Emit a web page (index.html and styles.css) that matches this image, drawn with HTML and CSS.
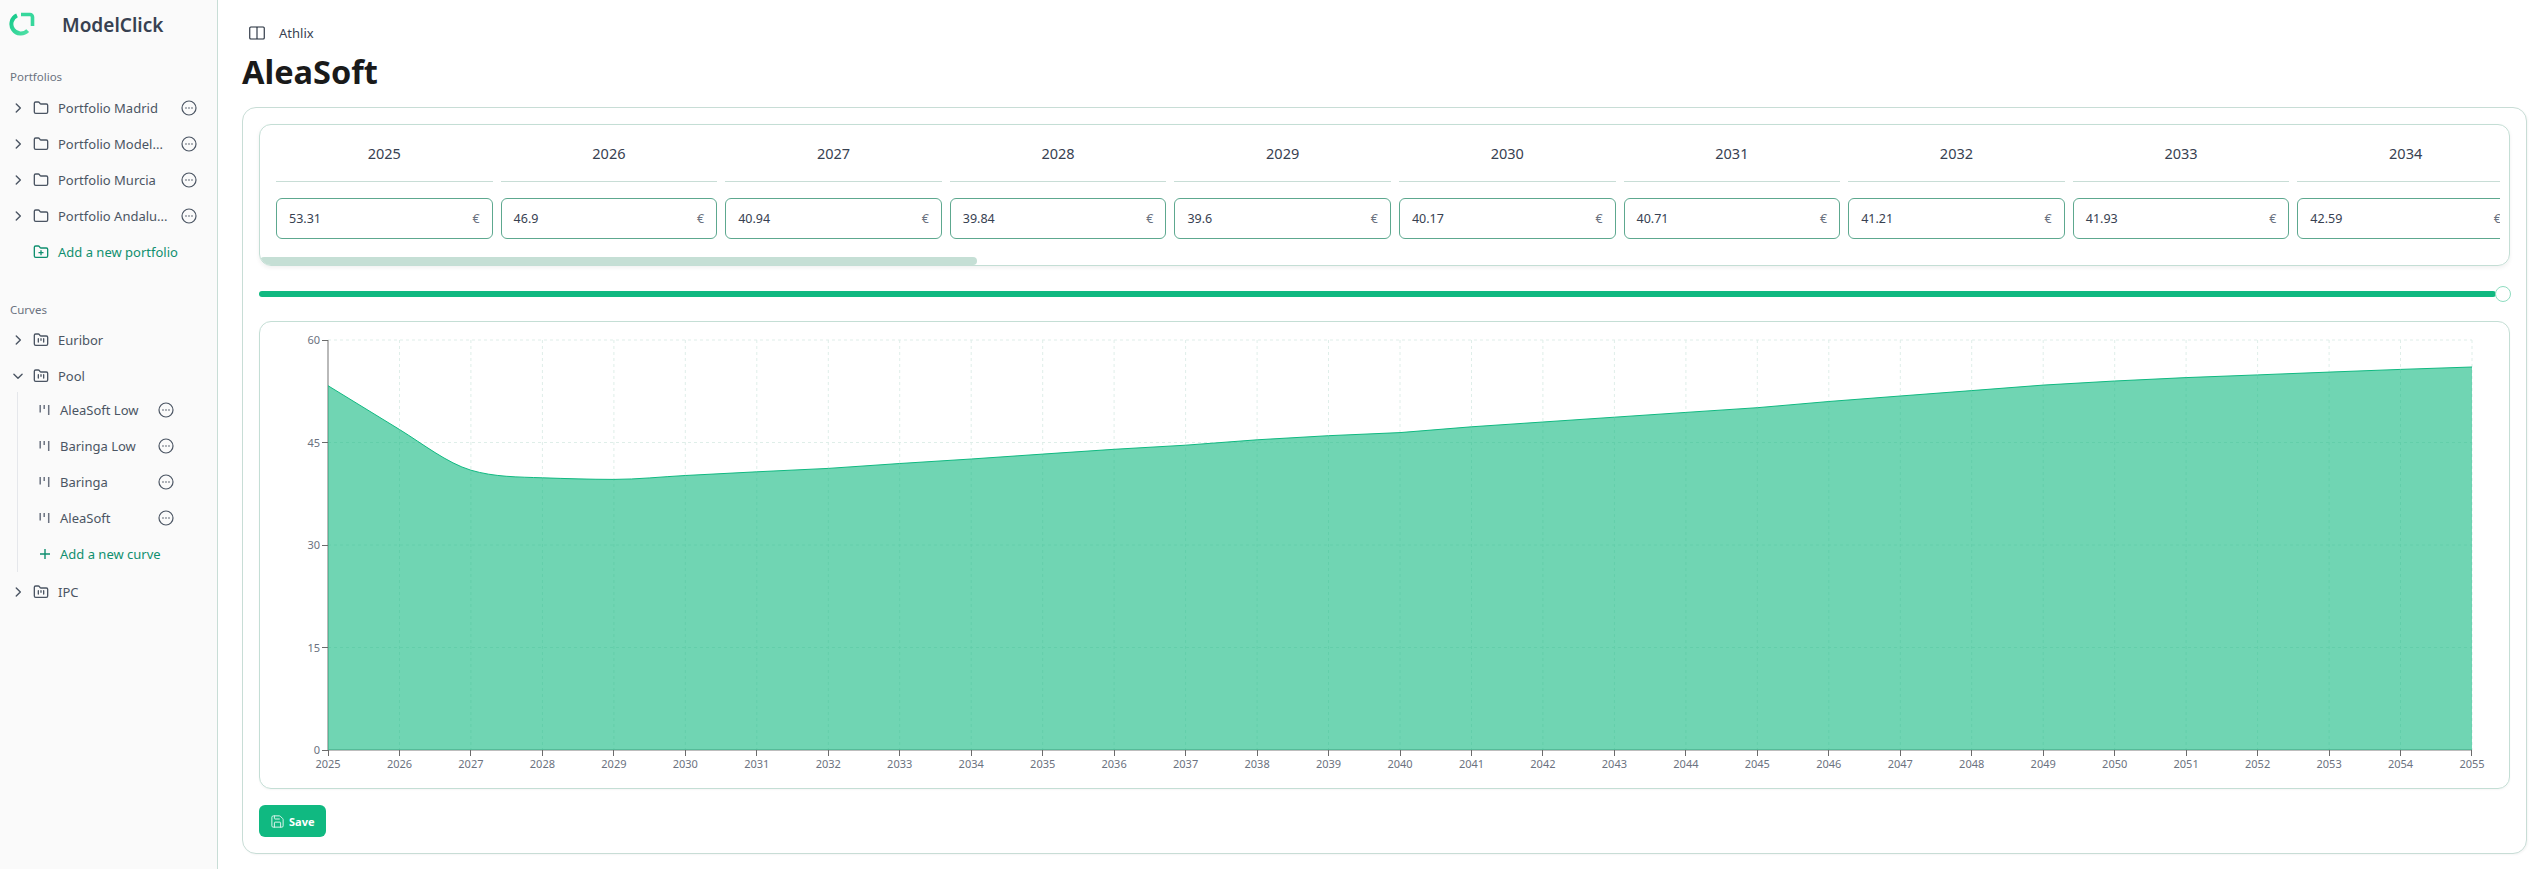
FILE: index.html
```html
<!DOCTYPE html>
<html lang="en">
<head>
<meta charset="utf-8">
<title>AleaSoft - ModelClick</title>
<link rel="stylesheet" href="styles.css">
</head>
<body>
<svg class="defs" width="0" height="0" aria-hidden="true">
  <symbol id="i-right" viewBox="0 0 24 24"><path d="m9 5 7 7-7 7"/></symbol>
  <symbol id="i-down" viewBox="0 0 24 24"><path d="m5 9 7 7 7-7"/></symbol>
  <symbol id="i-folder" viewBox="0 0 24 24"><path d="M20 20a2 2 0 0 0 2-2V8a2 2 0 0 0-2-2h-7.9a2 2 0 0 1-1.69-.9L9.6 3.9A2 2 0 0 0 7.93 3H4a2 2 0 0 0-2 2v13a2 2 0 0 0 2 2Z"/></symbol>
  <symbol id="i-folder-plus" viewBox="0 0 24 24"><path d="M20 20a2 2 0 0 0 2-2V8a2 2 0 0 0-2-2h-7.9a2 2 0 0 1-1.69-.9L9.6 3.9A2 2 0 0 0 7.93 3H4a2 2 0 0 0-2 2v13a2 2 0 0 0 2 2Z"/><path d="M12 10v6M9 13h6"/></symbol>
  <symbol id="i-folder-bars" viewBox="0 0 24 24"><path d="M20 20a2 2 0 0 0 2-2V8a2 2 0 0 0-2-2h-7.9a2 2 0 0 1-1.69-.9L9.6 3.9A2 2 0 0 0 7.93 3H4a2 2 0 0 0-2 2v13a2 2 0 0 0 2 2Z"/><path d="M8 10v5M12 10v2.5M16 10v5"/></symbol>
  <symbol id="i-more" viewBox="0 0 16 16"><circle cx="8" cy="8" r="7"/><path class="dots" d="M5 8h.01M8 8h.01M11 8h.01"/></symbol>
  <symbol id="i-bars" viewBox="0 0 12 12"><path d="M1.2 1v7.5M5.2 1v4M9.7 1v10"/></symbol>
</svg>

<aside class="sidebar">
  <div class="brand">
    <svg class="logo" width="26" height="26" viewBox="0 0 26 26">
      <defs><linearGradient id="lg" x1="0" y1="0" x2="1" y2="1"><stop offset="0" stop-color="#14c98a"/><stop offset="1" stop-color="#4fe0a6"/></linearGradient></defs>
      <path class="logo-a" d="M8 3.4A9.5 9.5 0 1 0 18.7 18.7"/>
      <path class="logo-b" d="M12 2.5H21A2.5 2.5 0 0 1 23.5 5V14"/>
    </svg>
    <span class="brand-name">ModelClick</span>
  </div>

  <div class="section-label">Portfolios</div>
  <div class="row"><svg class="chev"><use href="#i-right"/></svg><svg class="ico"><use href="#i-folder"/></svg><span class="label">Portfolio Madrid</span><svg class="more"><use href="#i-more"/></svg></div>
  <div class="row"><svg class="chev"><use href="#i-right"/></svg><svg class="ico"><use href="#i-folder"/></svg><span class="label">Portfolio Model...</span><svg class="more"><use href="#i-more"/></svg></div>
  <div class="row"><svg class="chev"><use href="#i-right"/></svg><svg class="ico"><use href="#i-folder"/></svg><span class="label">Portfolio Murcia</span><svg class="more"><use href="#i-more"/></svg></div>
  <div class="row"><svg class="chev"><use href="#i-right"/></svg><svg class="ico"><use href="#i-folder"/></svg><span class="label">Portfolio Andalu...</span><svg class="more"><use href="#i-more"/></svg></div>
  <div class="row add"><span class="chev-space"></span><svg class="ico"><use href="#i-folder-plus"/></svg><span class="label">Add a new portfolio</span></div>

  <div class="section-label curves">Curves</div>
  <div class="row"><svg class="chev"><use href="#i-right"/></svg><svg class="ico"><use href="#i-folder-bars"/></svg><span class="label">Euribor</span></div>
  <div class="row"><svg class="chev"><use href="#i-down"/></svg><svg class="ico"><use href="#i-folder-bars"/></svg><span class="label">Pool</span></div>
  <div class="sub">
    <div class="subrow"><svg class="bars"><use href="#i-bars"/></svg><span class="label">AleaSoft Low</span><svg class="more"><use href="#i-more"/></svg></div>
    <div class="subrow"><svg class="bars"><use href="#i-bars"/></svg><span class="label">Baringa Low</span><svg class="more"><use href="#i-more"/></svg></div>
    <div class="subrow"><svg class="bars"><use href="#i-bars"/></svg><span class="label">Baringa</span><svg class="more"><use href="#i-more"/></svg></div>
    <div class="subrow"><svg class="bars"><use href="#i-bars"/></svg><span class="label">AleaSoft</span><svg class="more"><use href="#i-more"/></svg></div>
    <div class="subrow add"><svg class="plus" viewBox="0 0 12 12"><path d="M6 1v10M1 6h10"/></svg><span class="label">Add a new curve</span></div>
  </div>
  <div class="row"><svg class="chev"><use href="#i-right"/></svg><svg class="ico"><use href="#i-folder-bars"/></svg><span class="label">IPC</span></div>
</aside>

<main class="main">
  <div class="crumb">
    <svg class="panel-ico" viewBox="0 0 16 14"><rect x="0.75" y="1" width="14.5" height="12" rx="1"/><path d="M8 1v12"/></svg>
    <span>Athlix</span>
  </div>
  <h1 class="title">AleaSoft</h1>

  <section class="card">
    <div class="table">
      <div class="years">
        <div class="col"><div class="year">2025</div><div class="field"><span>53.31</span><span class="eur">€</span></div></div>
        <div class="col"><div class="year">2026</div><div class="field"><span>46.9</span><span class="eur">€</span></div></div>
        <div class="col"><div class="year">2027</div><div class="field"><span>40.94</span><span class="eur">€</span></div></div>
        <div class="col"><div class="year">2028</div><div class="field"><span>39.84</span><span class="eur">€</span></div></div>
        <div class="col"><div class="year">2029</div><div class="field"><span>39.6</span><span class="eur">€</span></div></div>
        <div class="col"><div class="year">2030</div><div class="field"><span>40.17</span><span class="eur">€</span></div></div>
        <div class="col"><div class="year">2031</div><div class="field"><span>40.71</span><span class="eur">€</span></div></div>
        <div class="col"><div class="year">2032</div><div class="field"><span>41.21</span><span class="eur">€</span></div></div>
        <div class="col"><div class="year">2033</div><div class="field"><span>41.93</span><span class="eur">€</span></div></div>
        <div class="col"><div class="year">2034</div><div class="field"><span>42.59</span><span class="eur">€</span></div></div>
      </div>
      <div class="scroll-thumb"></div>
    </div>

    <div class="slider"><div class="track"></div><div class="knob"></div></div>

    <div class="chart">
      <svg class="plot" width="2249" height="466" viewBox="260 322 2249 466">
        <path class="grid" d="M328 340H2472M328 442.5H2472M328 545H2472M328 647.5H2472M399.5 340V750M470.9 340V750M542.4 340V750M613.9 340V750M685.3 340V750M756.8 340V750M828.3 340V750M899.7 340V750M971.2 340V750M1042.7 340V750M1114.1 340V750M1185.6 340V750M1257.1 340V750M1328.5 340V750M1400 340V750M1471.5 340V750M1542.9 340V750M1614.4 340V750M1685.9 340V750M1757.3 340V750M1828.8 340V750M1900.3 340V750M1971.7 340V750M2043.2 340V750M2114.7 340V750M2186.1 340V750M2257.6 340V750M2329.1 340V750M2400.5 340V750M2472 340V750"/>
        <path class="axis" d="M328 340V750H2472"/>
        <path class="tick" d="M322 340.5H328M322 442.5H328M322 545.5H328M322 647.5H328M322 750.5H328M328.5 750V756M399.5 750V756M470.5 750V756M542.5 750V756M613.5 750V756M685.5 750V756M756.5 750V756M828.5 750V756M899.5 750V756M971.5 750V756M1042.5 750V756M1114.5 750V756M1185.5 750V756M1257.5 750V756M1328.5 750V756M1400.5 750V756M1471.5 750V756M1542.5 750V756M1614.5 750V756M1685.5 750V756M1757.5 750V756M1828.5 750V756M1900.5 750V756M1971.5 750V756M2043.5 750V756M2114.5 750V756M2186.5 750V756M2257.5 750V756M2329.5 750V756M2400.5 750V756M2471.5 750V756"/>
        <path class="area" d="M328 385.7L399.5 429.5C423 444 447 463 470.9 470.2C494 477 518 477 542.4 477.8C566 478.6 590 479.4 613.9 479.4C637 479.4 661 476.8 685.3 475.5L756.8 471.8L828.3 468.4L899.7 463.5L971.2 459L1042.7 454.1L1114.1 449.3L1185.6 445.2L1257.1 439.8L1328.5 435.7L1400 432.6L1471.5 426.8L1542.9 422L1614.4 417.2L1685.9 412.4L1757.3 407.7L1828.8 401.5L1900.3 396L1971.7 390.6L2043.2 385.1L2114.7 381L2186.1 377.6L2257.6 374.9L2329.1 372.1L2400.5 369.4L2472 367V750H328Z"/>
        <path class="line" d="M328 385.7L399.5 429.5C423 444 447 463 470.9 470.2C494 477 518 477 542.4 477.8C566 478.6 590 479.4 613.9 479.4C637 479.4 661 476.8 685.3 475.5L756.8 471.8L828.3 468.4L899.7 463.5L971.2 459L1042.7 454.1L1114.1 449.3L1185.6 445.2L1257.1 439.8L1328.5 435.7L1400 432.6L1471.5 426.8L1542.9 422L1614.4 417.2L1685.9 412.4L1757.3 407.7L1828.8 401.5L1900.3 396L1971.7 390.6L2043.2 385.1L2114.7 381L2186.1 377.6L2257.6 374.9L2329.1 372.1L2400.5 369.4L2472 367"/>
        <g class="ylab">
          <text x="320" y="344">60</text><text x="320" y="447">45</text><text x="320" y="549">30</text><text x="320" y="652">15</text><text x="320" y="754">0</text>
        </g>
        <g class="xlab">
          <text x="328" y="768">2025</text><text x="399.5" y="768">2026</text><text x="470.9" y="768">2027</text><text x="542.4" y="768">2028</text><text x="613.9" y="768">2029</text><text x="685.3" y="768">2030</text><text x="756.8" y="768">2031</text><text x="828.3" y="768">2032</text><text x="899.7" y="768">2033</text><text x="971.2" y="768">2034</text><text x="1042.7" y="768">2035</text><text x="1114.1" y="768">2036</text><text x="1185.6" y="768">2037</text><text x="1257.1" y="768">2038</text><text x="1328.5" y="768">2039</text><text x="1400" y="768">2040</text><text x="1471.5" y="768">2041</text><text x="1542.9" y="768">2042</text><text x="1614.4" y="768">2043</text><text x="1685.9" y="768">2044</text><text x="1757.3" y="768">2045</text><text x="1828.8" y="768">2046</text><text x="1900.3" y="768">2047</text><text x="1971.7" y="768">2048</text><text x="2043.2" y="768">2049</text><text x="2114.7" y="768">2050</text><text x="2186.1" y="768">2051</text><text x="2257.6" y="768">2052</text><text x="2329.1" y="768">2053</text><text x="2400.5" y="768">2054</text><text x="2472" y="768">2055</text>
        </g>
      </svg>
    </div>

    <button class="save" type="button">
      <svg class="save-ico" viewBox="0 0 24 24"><path d="M15.2 3a2 2 0 0 1 1.4.6l3.8 3.8a2 2 0 0 1 .6 1.4V19a2 2 0 0 1-2 2H5a2 2 0 0 1-2-2V5a2 2 0 0 1 2-2z"/><path d="M17 21v-7a1 1 0 0 0-1-1H8a1 1 0 0 0-1 1v7"/><path d="M7 3v4a1 1 0 0 0 1 1h7"/></svg>
      <span>Save</span>
    </button>
  </section>
</main>
</body>
</html>
```
FILE: styles.css
```css
* { box-sizing: border-box; }
html, body { margin: 0; height: 100%; }
body {
  display: flex;
  height: 869px;
  overflow: hidden;
  background: #fff;
  font-family: "Noto Sans", "Open Sans", sans-serif;
  color: #1f2937;
}
.defs { position: absolute; }

/* sidebar */
.sidebar {
  flex: none;
  width: 218px;
  background: #fafafa;
  border-right: 1px solid #c8ddd6;
}
.brand {
  display: flex;
  align-items: center;
  height: 49px;
  padding-left: 9px;
  gap: 27px;
}
.logo { flex: none; }
.logo-a { fill: none; stroke: url(#lg); stroke-width: 4; }
.logo-b { fill: none; stroke: #37d79c; stroke-width: 3.6; }
.brand-name { font-size: 19px; font-weight: 600; color: #374151; }
.section-label {
  display: flex;
  align-items: center;
  height: 20px;
  margin-top: 17px;
  padding-left: 10px;
  font-size: 11.5px;
  color: #6b7280;
}
.section-label.curves { margin-top: 29px; }
.section-label + .row { margin-top: 4px; }
.section-label.curves + .row { margin-top: 3px; }
.row, .subrow {
  display: flex;
  align-items: center;
  height: 36px;
  font-size: 13px;
  color: #4b5563;
}
.row { padding: 0 20px 0 11px; }
.subrow { padding: 0 43px 0 21px; }
.label {
  flex: 1;
  min-width: 0;
  white-space: nowrap;
}
.row .label { margin-left: 9px; }
.subrow .label { margin-left: 9px; }
.chev, .chev-space { flex: none; width: 14px; height: 14px; margin-right: 8px; }
.chev { fill: none; stroke: #4b5563; stroke-width: 2.4; stroke-linecap: round; stroke-linejoin: round; }
.ico { flex: none; width: 16px; height: 16px; fill: none; stroke: #4b5563; stroke-width: 2; stroke-linecap: round; stroke-linejoin: round; }
.more { flex: none; width: 16px; height: 16px; fill: none; stroke: #4b5563; stroke-width: 1.2; }
.dots { stroke-width: 1.6; stroke-linecap: round; }
.bars { flex: none; width: 12px; height: 12px; fill: none; stroke: #6b7280; stroke-width: 1.5; }
.plus { flex: none; width: 12px; height: 12px; fill: none; stroke: #0f8f6f; stroke-width: 1.4; }
.add { color: #0f8f6f; }
.add .ico { stroke: #0f8f6f; }
.sub {
  margin: -2px 0 2px 17px;
  border-left: 1px solid #e5e7eb;
}

/* main */
.main {
  flex: 1;
  min-width: 0;
  display: flex;
  flex-direction: column;
  padding: 15px 17px 15px 24px;
}
.crumb {
  display: flex;
  align-items: center;
  gap: 14px;
  height: 36px;
  padding-left: 7px;
  font-size: 13px;
  color: #374151;
}
.panel-ico { width: 16px; height: 14px; fill: none; stroke: #1f2937; stroke-width: 1.1; }
.title {
  margin: 0;
  height: 57px;
  font-size: 32.5px;
  line-height: 42px;
  font-weight: 700;
  color: #1a1a1a;
}

.card {
  flex: none;
  height: 747px;
  padding: 16px;
  border: 1px solid #c8ddd6;
  border-radius: 14px;
  box-shadow: 1px 1px 2px rgba(0, 0, 0, .04);
  background: #fff;
}
.table {
  height: 142px;
  border: 1px solid #c4ded5;
  border-radius: 12px;
  overflow: hidden;
  box-shadow: 0 2px 4px rgba(0, 0, 0, .06);
}
.years {
  display: flex;
  gap: 8px;
  margin: 0 9px 0 16px;
  overflow: hidden;
}
.col { flex: none; width: 216.6px; }
.year {
  height: 57px;
  padding-top: 17px;
  border-bottom: 1px solid #c8ddd6;
  text-align: center;
  font-size: 14.5px;
  line-height: 22px;
  color: #374151;
}
.field {
  display: flex;
  align-items: center;
  justify-content: space-between;
  height: 41px;
  margin-top: 16px;
  padding: 0 12px;
  border: 1px solid #5da88f;
  border-radius: 6px;
  font-size: 12.5px;
  color: #374151;
}
.eur { color: #6b7280; }
.scroll-thumb {
  width: 717px;
  height: 8px;
  margin-top: 18px;
  border-radius: 4px;
  background: #c5dfd5;
}

.slider {
  display: flex;
  align-items: center;
  height: 16px;
  margin: 20px -1px 0 0;
}
.track { flex: 1; height: 6px; border-radius: 3px; background: #10b981; }
.knob {
  flex: none;
  width: 16px;
  height: 16px;
  margin-left: -1px;
  border: 1.5px solid #8edcc0;
  border-radius: 50%;
  background: #fff;
}

.chart {
  height: 468px;
  margin-top: 19px;
  border: 1px solid #c4ded5;
  border-radius: 12px;
  box-shadow: 0 1px 2px rgba(0, 0, 0, .04);
}
.plot { display: block; }
.grid { fill: none; stroke: #dfeee9; stroke-width: 1; stroke-dasharray: 3 3; }
.axis { fill: none; stroke: #a8a8a8; stroke-width: 1.6; }
.tick { fill: none; stroke: #6b6b6b; stroke-width: 1; }
.area { fill: #10b981; fill-opacity: .6; stroke: none; }
.line { fill: none; stroke: #10b981; stroke-width: 1; }
.ylab text { font-size: 11px; fill: #6b7280; text-anchor: end; }
.xlab text { font-size: 11px; fill: #6b7280; text-anchor: middle; }

.save {
  display: flex;
  align-items: center;
  gap: 4px;
  width: 67px;
  height: 32px;
  margin-top: 16px;
  padding: 0 0 0 11px;
  border: 0;
  border-radius: 6px;
  background: #10b981;
  font-family: inherit;
  font-size: 11px;
  font-weight: 700;
  color: #fff;
}
.save-ico { flex: none; width: 15px; height: 15px; fill: none; stroke: #fff; stroke-width: 1.6; stroke-linecap: round; stroke-linejoin: round; opacity: .85; }
```
